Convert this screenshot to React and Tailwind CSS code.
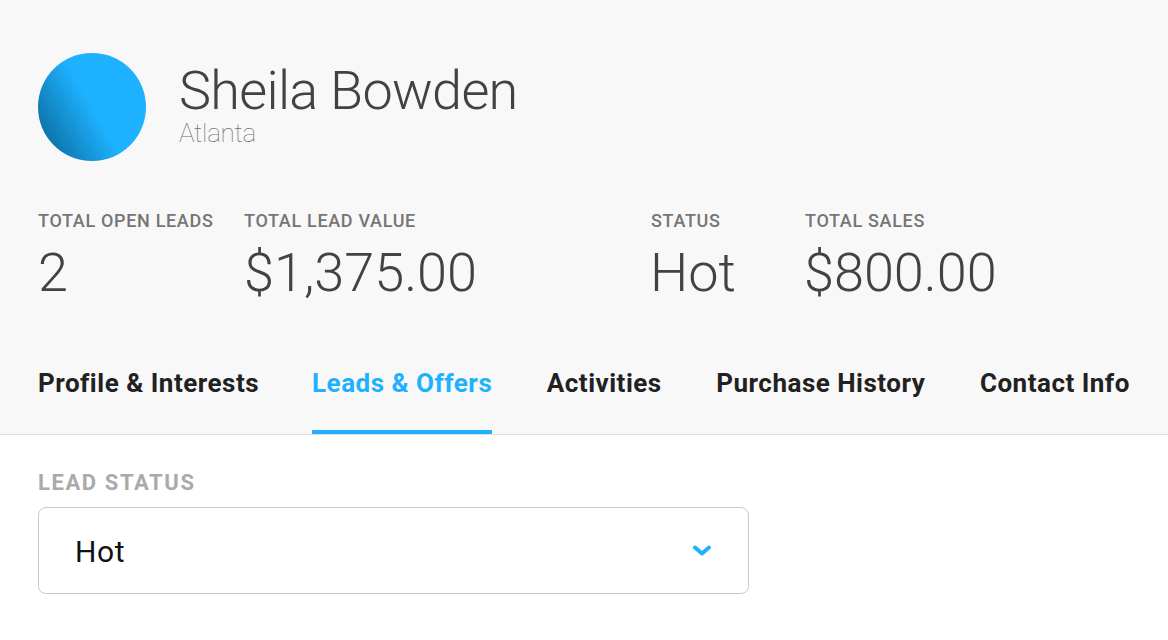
function Stat({ label, value, className, valueClassName = "" }) {
  return (
    <div className={className}>
      <div className="pt-px text-[18px] leading-[20px] font-medium tracking-[0.67px] text-[#757575]">{label}</div>
      <div className={`mt-[12px] text-[54px] leading-[60px] font-light text-[#424242] ${valueClassName}`}>{value}</div>
    </div>
  );
}

function Tab({ children, active, className = "" }) {
  return (
    <div className={`h-full shrink-0 whitespace-nowrap flex items-center border-b-4 pb-[20px] ${active ? "border-[#1eb1ff] text-[#1eb1ff]" : "border-transparent text-[#212121]"} ${className}`}>
      {children}
    </div>
  );
}

export default function App() {
  return (
    <div className="w-[1168px] h-[640px] overflow-hidden bg-white font-['Roboto',sans-serif]">
      <div className="h-[435px] bg-[#f8f8f8] border-b border-[#dddddd] px-[38px] flex flex-col">
        <div className="flex items-center gap-[33px] pt-[53px]">
          <div className="w-[108px] h-[108px] rounded-full bg-[linear-gradient(60deg,#0b6d9f_8%,#1eb1ff_50%,#1eb1ff_100%)]" />
          <div className="-mt-[8px]">
            <div className="text-[54px] leading-[60px] font-light tracking-[-0.7px] text-[#424242]">Sheila Bowden</div>
            <div className="text-[26px] leading-[24px] font-thin tracking-[-0.25px] text-[#707070]">Atlanta</div>
          </div>
        </div>
        <div className="flex mt-[49px]">
          <Stat className="w-[206px]" label="TOTAL OPEN LEADS" value="2" />
          <Stat className="w-[407px]" label="TOTAL LEAD VALUE" value="$1,375.00" />
          <Stat className="w-[154px]" label="STATUS" value="Hot" valueClassName="-ml-px" />
          <Stat label="TOTAL SALES" value="$800.00" valueClassName="-ml-px" />
        </div>
        <div className="mt-auto h-[78px] flex gap-[54.6px] text-[26px] font-bold tracking-[0.5px]">
          <Tab className="-mr-[1.6px]">Profile &amp; Interests</Tab>
          <Tab active>Leads &amp; Offers</Tab>
          <Tab>Activities</Tab>
          <Tab>Purchase History</Tab>
          <Tab>Contact Info</Tab>
        </div>
      </div>
      <div className="px-[38px] pt-[35px]">
        <div className="text-[22px] leading-[26px] font-bold tracking-[1.6px] text-[#aaaaaa]">LEAD STATUS</div>
        <div className="mt-[11px] w-[711px] h-[87px] rounded-[8px] border border-[#c9c9c9] bg-white flex items-center justify-between pl-[36px] pr-[36px]">
          <span className="pt-[2px] text-[30px] tracking-[0.6px] text-[#111111]">Hot</span>
          <svg width="20" height="12" viewBox="0 0 20 12" fill="none">
            <path d="M3 2.5L10 8.5L17 2.5" stroke="#1eb1ff" strokeWidth="4" strokeLinecap="round" strokeLinejoin="round" />
          </svg>
        </div>
      </div>
    </div>
  );
}
